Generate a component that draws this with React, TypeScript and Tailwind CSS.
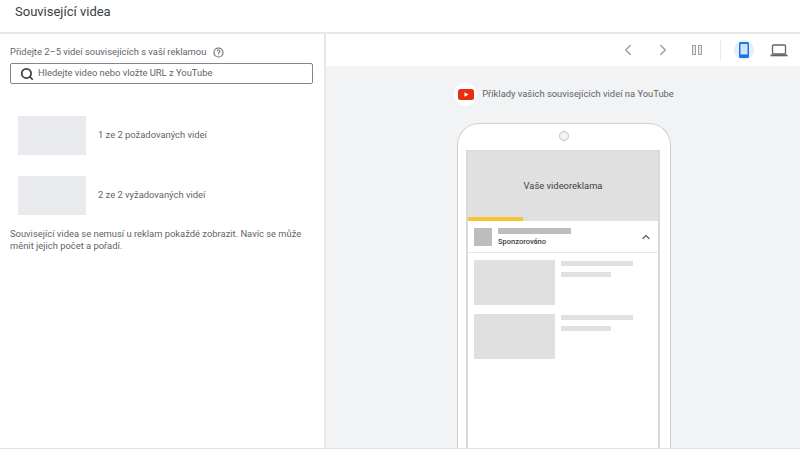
import { ChevronLeft, ChevronRight, ChevronUp, Search } from "lucide-react";

function Placeholder({ label }: { label: string }) {
    return (
        <div className="flex items-center gap-3 h-[39px]">
            <div className="w-[68px] h-[39px] bg-[#e8eaed] shrink-0" />
            <span className="text-[9.4px] text-[#5f6368]">{label}</span>
        </div>
    );
}

function RelatedRow() {
    return (
        <div className="flex gap-[6px]">
            <div className="w-[81px] h-[45px] bg-[#e0e0e0] shrink-0" />
            <div className="flex flex-col gap-[6px] pt-[1px]">
                <div className="w-[72px] h-[5px] bg-[#e0e0e0]" />
                <div className="w-[50px] h-[5px] bg-[#e0e0e0]" />
            </div>
        </div>
    );
}

export default function App() {
    return (
        <div className="w-[800px] h-[450px] overflow-hidden bg-white flex flex-col pb-[1px] font-['Roboto',sans-serif]">

            {/* Header */}
            <div className="h-[34px] shrink-0 border-b-2 border-[#e8e8e8] pl-[15px] pt-[3px]">
                <h1 className="text-[13px] leading-[18px] text-[#3c4043]">Související videa</h1>
            </div>

            <div className="flex flex-1 min-h-0 border-b border-[#e0e0e0]">

                {/* Left panel */}
                <div className="w-[326px] shrink-0 border-r-2 border-[#e8e8e8] pl-[10px] pr-[11px] pt-[12px]">
                    <div className="flex items-center gap-[7px] h-[13px]">
                        <span className="text-[9.4px] text-[#5f6368]">Přidejte 2–5 videí souvisejících s vaší reklamou</span>
                        <svg width="11" height="11" viewBox="0 0 24 24" fill="none" stroke="#5f6368" strokeWidth="2.2">
                            <circle cx="12" cy="12" r="10" />
                            <path d="M9 9.5a3 3 0 1 1 4.5 2.6c-1 .6-1.5 1.1-1.5 2.4" />
                            <path d="M12 17v1.2" />
                        </svg>
                    </div>
                    <div className="mt-[4px] h-[21px] border border-[#80868b] rounded-[2px] flex items-center pl-[9px] gap-[4px]">
                        <Search size={14} strokeWidth={3} className="text-[#3c4043]" />
                        <span className="text-[9.4px] text-[#5f6368]">Hledejte video nebo vložte URL z YouTube</span>
                    </div>

                    <div className="mt-[32px] pl-[8px] flex flex-col gap-[21px]">
                        <Placeholder label="1 ze 2 požadovaných videí" />
                        <Placeholder label="2 ze 2 vyžadovaných videí" />
                    </div>

                    <p className="mt-[13px] text-[9.4px] leading-[12px] text-[#5f6368]">
                        Související videa se nemusí u reklam pokaždé zobrazit. Navíc se může měnit jejich počet a pořadí.
                    </p>
                </div>

                {/* Right panel */}
                <div className="flex-1 flex flex-col min-w-0">

                    {/* Toolbar */}
                    <div className="h-[32px] shrink-0 flex items-center justify-end pr-[12px]">
                        <ChevronLeft size={18} className="text-[#9aa0a6]" />
                        <ChevronRight size={18} className="text-[#9aa0a6] ml-[17px]" />
                        <div className="ml-[20px] flex gap-[2px]">
                            <div className="w-[4px] h-[10px] border border-[#9aa0a6] bg-[#e8eaed]" />
                            <div className="w-[4px] h-[10px] border border-[#9aa0a6] bg-[#e8eaed]" />
                        </div>
                        <div className="ml-[18px] w-px h-[20px] bg-[#e8eaed]" />
                        <div className="ml-[13px] w-[20px] h-[20px] rounded-full bg-[#d2e3fc]/60 flex items-center justify-center">
                            <svg width="10" height="16" viewBox="0 0 10 16">
                                <rect x="0" y="0" width="10" height="16" rx="1.5" fill="#1a73e8" />
                                <rect x="1.5" y="2" width="7" height="10.5" fill="#d2e3fc" />
                            </svg>
                        </div>
                        <svg className="ml-[16px]" width="18" height="13" viewBox="0 0 18 13" fill="none">
                            <rect x="2.5" y="1" width="13" height="9" rx="1" stroke="#5f6368" strokeWidth="1.3" />
                            <rect x="0.5" y="10.5" width="17" height="1.8" fill="#5f6368" />
                        </svg>
                    </div>

                    {/* Preview */}
                    <div className="flex-1 min-h-0 bg-[#f1f3f4] flex flex-col items-center overflow-hidden pl-[1px]">
                        <div className="mt-[16px] h-[24px] flex items-center gap-[5px] pl-[1px]">
                            <div className="w-[23px] h-[23px] rounded-full bg-white flex items-center justify-center">
                                <svg width="16" height="11" viewBox="0 0 16 11">
                                    <rect width="16" height="11" rx="2.5" fill="#e62e12" />
                                    <path d="M6.5 3.2v4.6L10.5 5.5z" fill="#fff" />
                                </svg>
                            </div>
                            <span className="text-[9.4px] text-[#5f6368]">Příklady vašich souvisejících videí na YouTube</span>
                        </div>

                        {/* Phone */}
                        <div className="mt-[17px] w-[214px] flex-1 bg-white border border-b-0 border-[#d0d0d0] rounded-t-[22px] flex flex-col items-center">
                            <div className="mt-[7px] w-[10px] h-[10px] rounded-full bg-[#f1f3f4] border border-[#c4c4c4]" />
                            <div className="mt-[9px] mr-[1px] w-[194px] flex-1 border-x-2 border-t border-[#dadada]">
                                <div className="relative h-[70px] bg-[#e0e0e0] flex items-center justify-center">
                                    <span className="text-[9.4px] text-[#3c4043]">Vaše videoreklama</span>
                                    <div className="absolute left-0 bottom-0 w-[55px] h-[4px] bg-[#f4c534]" />
                                </div>
                                <div className="h-[32px] border-b border-[#e8e8e8] flex items-center pl-[6px] pr-[6px]">
                                    <div className="w-[18px] h-[18px] bg-[#bdbdbd] shrink-0" />
                                    <div className="ml-[6px] flex-1 flex flex-col gap-[3px]">
                                        <div className="w-[73px] h-[6px] bg-[#bdbdbd]" />
                                        <span className="text-[7.5px] leading-[9px] font-medium text-[#3c4043]">Sponzorováno</span>
                                    </div>
                                    <ChevronUp size={12} strokeWidth={2.5} className="text-[#5f6368]" />
                                </div>
                                <div className="pl-[6px] pt-[7px] flex flex-col gap-[9px]">
                                    <RelatedRow />
                                    <RelatedRow />
                                </div>
                            </div>
                        </div>
                    </div>
                </div>
            </div>
        </div>
    );
}
